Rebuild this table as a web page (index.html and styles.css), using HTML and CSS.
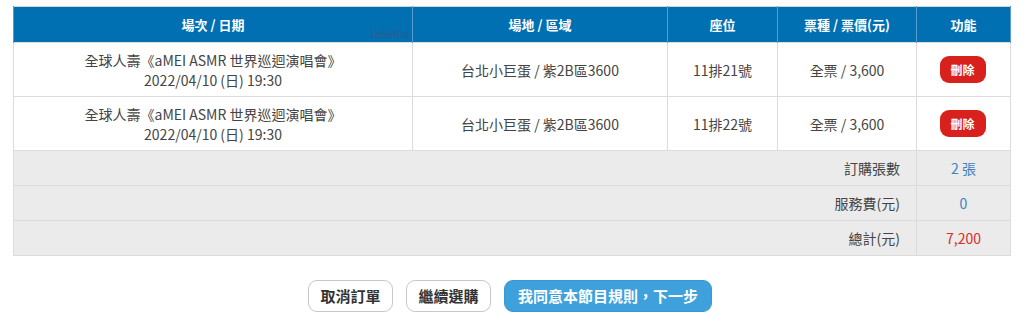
FILE: index.html
```html
<!DOCTYPE html>
<html lang="zh-Hant">
<head>
<meta charset="utf-8">
<title>購物車</title>
<link rel="stylesheet" href="styles.css">
</head>
<body>
<div class="page">
  <table class="cart">
    <colgroup>
      <col class="c-show"><col class="c-venue"><col class="c-seat"><col class="c-price"><col class="c-act">
    </colgroup>
    <thead>
      <tr>
        <th class="th-show">場次 / 日期<span class="hash">1a5ef0a</span></th>
        <th>場地 / 區域</th>
        <th>座位</th>
        <th>票種 / 票價(元)</th>
        <th>功能</th>
      </tr>
    </thead>
    <tbody>
      <tr class="item">
        <td>全球人壽《aMEI ASMR 世界巡迴演唱會》<br>2022/04/10 (日) 19:30</td>
        <td>台北小巨蛋 / 紫2B區3600</td>
        <td>11排21號</td>
        <td>全票 / 3,600</td>
        <td><button class="del">刪除</button></td>
      </tr>
      <tr class="item">
        <td>全球人壽《aMEI ASMR 世界巡迴演唱會》<br>2022/04/10 (日) 19:30</td>
        <td>台北小巨蛋 / 紫2B區3600</td>
        <td>11排22號</td>
        <td>全票 / 3,600</td>
        <td><button class="del">刪除</button></td>
      </tr>
      <tr class="sum">
        <td colspan="4" class="label">訂購張數</td>
        <td class="val blue">2 張</td>
      </tr>
      <tr class="sum">
        <td colspan="4" class="label">服務費(元)</td>
        <td class="val blue">0</td>
      </tr>
      <tr class="sum">
        <td colspan="4" class="label">總計(元)</td>
        <td class="val red">7,200</td>
      </tr>
    </tbody>
  </table>
  <div class="actions">
    <button class="btn">取消訂單</button>
    <button class="btn">繼續選購</button>
    <button class="btn primary">我同意本節目規則，下一步</button>
  </div>
</div>
</body>
</html>
```

FILE: styles.css
```css
* { box-sizing: border-box; }
html, body { margin: 0; background: #fff; }
body {
  font-family: "Noto Sans CJK TC", "Noto Sans", sans-serif;
  color: #444;
  font-size: 14px;
}
.page { padding: 6px 14px 0 13px; }
.cart {
  width: 997px;
  border-collapse: collapse;
  table-layout: fixed;
  border: 1px solid #d4d4d4;
}
.c-show { width: 399px; }
.c-venue { width: 255px; }
.c-seat { width: 110px; }
.c-price { width: 139px; }
.c-act { width: 94px; }
.cart th {
  background: #0070b3;
  color: #fff;
  font-weight: 700;
  font-size: 13px;
  height: 36px;
  padding: 0;
  text-align: center;
  border-left: 1px solid #5b9ccc;
  border-right: 1px solid #5b9ccc;
}
.th-show { position: relative; }
.hash {
  position: absolute;
  right: 3px;
  bottom: 3px;
  font-size: 11px;
  font-weight: 400;
  color: #2a5d8a;
  line-height: 1;
}
.cart td {
  border: 1px solid #dcdcdc;
  text-align: center;
  padding: 0 6px;
  line-height: 20px;
}
.item td { height: 54px; background: #fff; }
.sum td { height: 35px; background: #ebebeb; }
.sum .label { text-align: right; padding-right: 16px; }
.blue { color: #3d82c4; }
.red { color: #e02a2a; }
.del {
  font-family: inherit;
  background: #d8211c;
  color: #fff;
  border: none;
  border-radius: 9px;
  font-size: 12px;
  font-weight: 700;
  width: 46px;
  height: 27px;
  padding: 0;
  margin-right: 2px;
  vertical-align: middle;
}
.actions {
  display: flex;
  justify-content: center;
  gap: 13px;
  margin-top: 24px;
  padding-right: 3px;
}
.btn {
  font-family: inherit;
  font-size: 15px;
  font-weight: 700;
  color: #333;
  background: #fff;
  border: 1px solid #c8c8c8;
  border-radius: 9px;
  width: 85px;
  height: 32px;
  padding: 0;
  line-height: 30px;
}
.btn.primary {
  width: 208px;
  background: #3ea1dc;
  border-color: #3a98d0;
  color: #fff;
}
```
